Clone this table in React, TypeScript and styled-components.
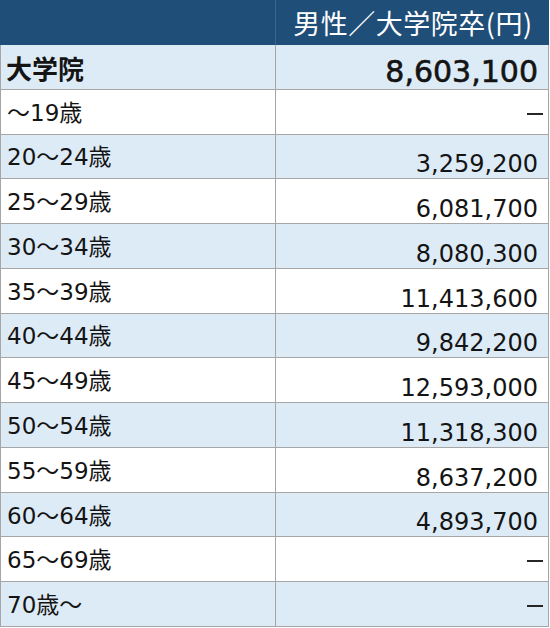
import React from "react";
import styled, { createGlobalStyle } from "styled-components";

const Global = createGlobalStyle`
  html, body { margin: 0; padding: 0; background: #ffffff; }
  * { box-sizing: border-box; }
`;

const Table = styled.div`
  display: grid;
  grid-template-columns: 276px 273px;
  grid-template-rows: 45px repeat(13, 1fr);
  width: 549px;
  height: 627px;
  font-family: "DejaVu Sans", "Noto Sans CJK JP", sans-serif;
  color: #141414;
`;

const HeadCell = styled.div<{ $first?: boolean }>`
  background: #1f4e79;
  color: #ffffff;
  display: flex;
  align-items: center;
  justify-content: center;
  font-family: "Noto Sans CJK JP", sans-serif;
  font-size: 27px;
  letter-spacing: 0.5px;
  line-height: 1;
  border-left: ${(p) => (p.$first ? "1px solid #1f4e79" : "none")};
  border-right: 1px solid ${(p) => (p.$first ? "#3a6690" : "#1f4e79")};
  padding-bottom: 1px;
  padding-left: 2px;
`;

const LabelCell = styled.div<{ $alt: boolean; $bold?: boolean }>`
  background: ${(p) => (p.$alt ? "#ddebf7" : "#ffffff")};
  border-left: 1px solid #a6a6a6;
  border-right: 1px solid #a6a6a6;
  border-bottom: 1px solid #a6a6a6;
  display: flex;
  align-items: center;
  padding-left: ${(p) => (p.$bold ? "5px" : "6px")};
  padding-top: 3px;
  font-family: ${(p) =>
    p.$bold ? '"Noto Sans CJK JP", sans-serif' : '"DejaVu Sans", "Noto Sans CJK JP", sans-serif'};
  font-size: ${(p) => (p.$bold ? "26px" : "23px")};
  font-weight: ${(p) => (p.$bold ? 700 : 400)};
  line-height: 1;
  white-space: nowrap;
`;

const ValueCell = styled.div<{ $alt: boolean; $bold?: boolean; $dash?: boolean }>`
  background: ${(p) => (p.$alt ? "#ddebf7" : "#ffffff")};
  border-right: 1px solid #a6a6a6;
  border-bottom: 1px solid #a6a6a6;
  display: flex;
  align-items: ${(p) => (p.$dash ? "center" : "flex-end")};
  justify-content: flex-end;
  padding-right: ${(p) => (p.$dash ? "5px" : "10px")};
  padding-top: ${(p) => (p.$dash ? "4px" : "0")};
  padding-bottom: ${(p) => (p.$dash ? "0" : "2px")};
  font-size: ${(p) => (p.$bold ? "30px" : "24px")};
  -webkit-text-stroke: ${(p) => (p.$bold ? "0.6px #141414" : "0")};
  line-height: 1;
  white-space: nowrap;
`;

const Dash = styled.span`
  display: block;
  width: 16px;
  height: 2px;
  background: #262626;
`;

type Row = { label: string; value: string | null };

const rows: Row[] = [
  { label: "大学院", value: "8,603,100" },
  { label: "～19歳", value: null },
  { label: "20～24歳", value: "3,259,200" },
  { label: "25～29歳", value: "6,081,700" },
  { label: "30～34歳", value: "8,080,300" },
  { label: "35～39歳", value: "11,413,600" },
  { label: "40～44歳", value: "9,842,200" },
  { label: "45～49歳", value: "12,593,000" },
  { label: "50～54歳", value: "11,318,300" },
  { label: "55～59歳", value: "8,637,200" },
  { label: "60～64歳", value: "4,893,700" },
  { label: "65～69歳", value: null },
  { label: "70歳～", value: null },
];

export default function App() {
  return (
    <>
      <Global />
      <Table>
        <HeadCell $first />
        <HeadCell>男性／大学院卒(円)</HeadCell>
        {rows.map((r, i) => {
          const alt = i % 2 === 0;
          const bold = i === 0;
          const dash = r.value === null;
          return (
            <React.Fragment key={r.label}>
              <LabelCell $alt={alt} $bold={bold}>
                {r.label}
              </LabelCell>
              <ValueCell $alt={alt} $bold={bold} $dash={dash}>
                {dash ? <Dash aria-label="—" /> : r.value}
              </ValueCell>
            </React.Fragment>
          );
        })}
      </Table>
    </>
  );
}
